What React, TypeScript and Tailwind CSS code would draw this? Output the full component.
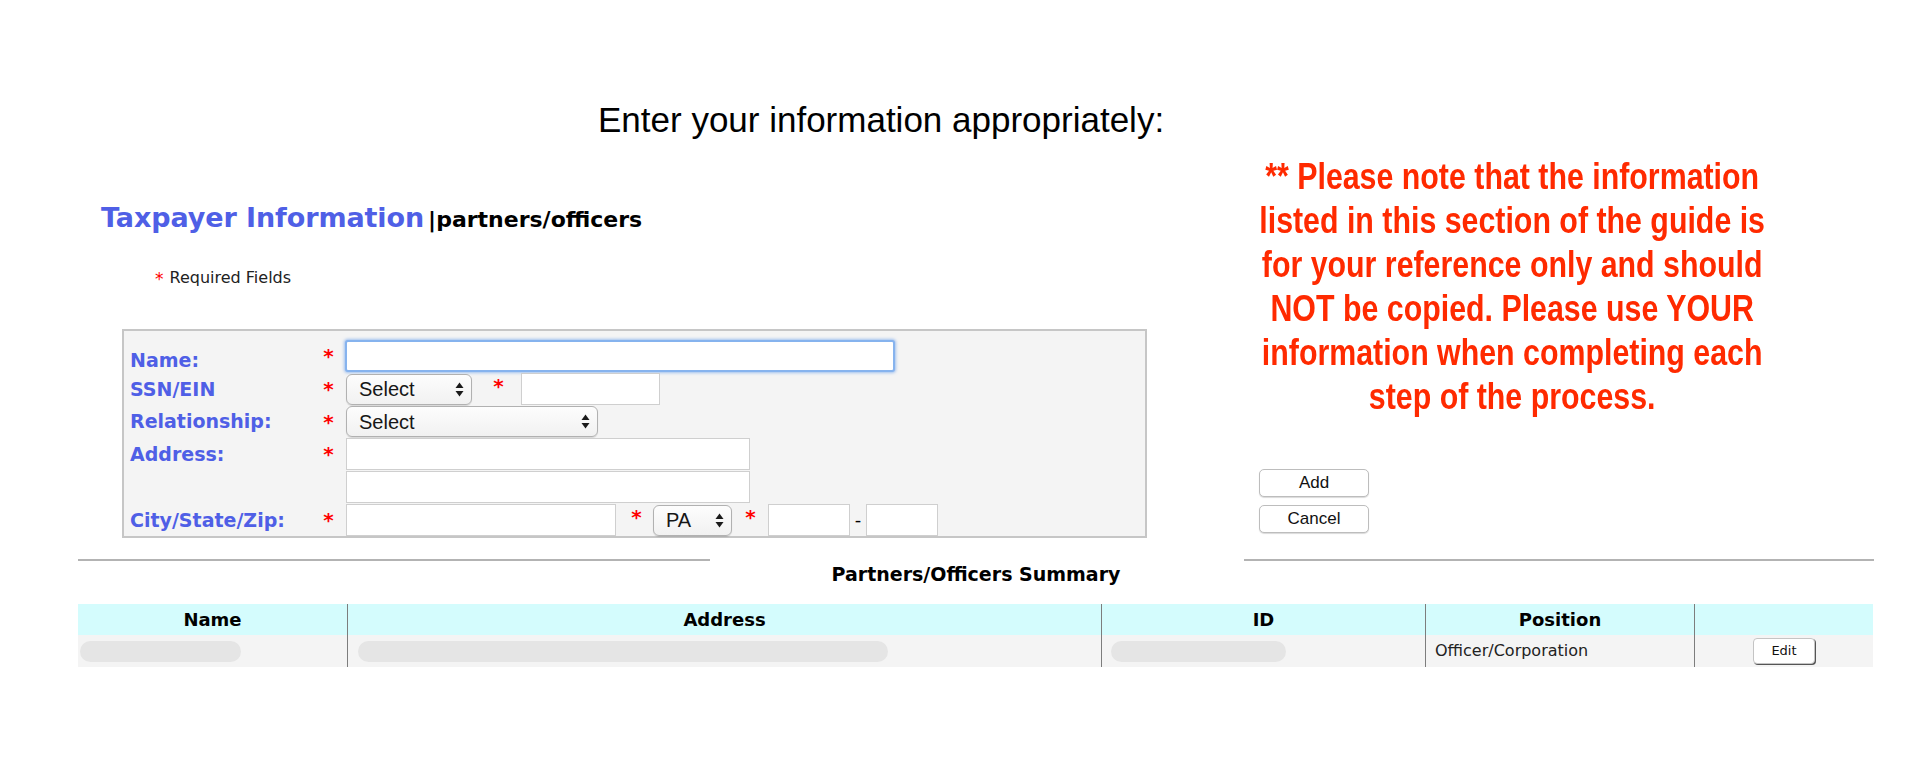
import React from 'react';

const Star = ({ className = '' }: { className?: string }) => (
    <span className={`text-[#ff0000] text-[20px] leading-none font-bold ${className}`}>*</span>
);

const Arrows = () => (
    <svg width="9" height="15" viewBox="0 0 9 15" className="shrink-0">
        <polygon points="0.5,6 4.5,0.5 8.5,6" fill="#1a1a1a" />
        <polygon points="0.5,9 4.5,14.5 8.5,9" fill="#1a1a1a" />
    </svg>
);

function FakeSelect({ label, className }: { label: string; className: string }) {
    return (
        <div
            className={`h-[31px] rounded-[6px] border border-[#b1b1b1] bg-gradient-to-b from-[#fdfdfd] to-[#f1f1f1] flex items-center justify-between pl-[12px] pr-[7px] font-['Liberation_Sans',Arial,sans-serif] text-[20px] text-[#161616] shadow-[0_1px_1px_rgba(0,0,0,0.12)] ${className}`}
        >
            <span>{label}</span>
            <Arrows />
        </div>
    );
}

function Field({ className }: { className: string }) {
    return <div className={`h-[32px] bg-white border border-[#cfcfcf] ${className}`} />;
}

const Label = ({ children }: { children: React.ReactNode }) => (
    <div className="w-[190px] text-[19px] font-bold text-[#4f5fe6] leading-none">{children}</div>
);

const ReqCol = () => (
    <div className="w-[17px] flex justify-center">
        <Star />
    </div>
);

const Pill = ({ className }: { className: string }) => (
    <div className={`h-[21px] rounded-full bg-[#e5e5e5] blur-[0.6px] ${className}`} />
);

export default function App() {
    return (
        <div className="w-[1932px] h-[784px] bg-white overflow-hidden font-['DejaVu_Sans',Verdana,sans-serif] text-black">
            <div className="h-[139px] pt-[100px] pl-[598px] font-['Liberation_Sans',Arial,sans-serif] text-[35px] leading-[40px]">
                Enter your information appropriately:
            </div>

            <div className="flex">
                {/* left: form */}
                <div className="w-[1244px] pl-[101px] pt-[63px]">
                    <div className="flex items-baseline h-[32px] leading-[32px]">
                        <span className="text-[27px] font-bold text-[#4f5fe6] tracking-[-0.1px]">Taxpayer Information</span>
                        <span className="ml-[4px] text-[22px] font-bold text-black">|partners/officers</span>
                    </div>
                    <div className="mt-[34px] pl-[54px] h-[20px] flex items-center text-[16px] text-[#222]">
                        <span className="text-[#ff0000] text-[17px] mr-[6px] mt-[3px]">*</span>
                        Required Fields
                    </div>

                    <div className="mt-[41px] ml-[21px] w-[1025px] h-[209px] border-2 border-[#c6c6c6] bg-[#f4f4f4] pt-[9px] pl-[6px] flex flex-col gap-[1px]">
                        <div className="h-[32px] flex items-center">
                            <Label><span className="relative top-[4px]">Name:</span></Label>
                            <ReqCol />
                            <div className="ml-[8px] w-[550px] h-[32px] bg-white rounded-[3px] border-2 border-[#86b3ee] shadow-[0_0_3px_1px_rgba(90,150,235,0.55)]" />
                        </div>
                        <div className="h-[32px] flex items-center">
                            <Label>SSN/EIN</Label>
                            <ReqCol />
                            <FakeSelect label="Select" className="ml-[9px] w-[126px]" />
                            <div className="ml-[18px] w-[17px] flex justify-center -mt-[6px]"><Star /></div>
                            <Field className="ml-[14px] w-[139px]" />
                        </div>
                        <div className="h-[32px] flex items-center">
                            <Label>Relationship:</Label>
                            <ReqCol />
                            <FakeSelect label="Select" className="ml-[9px] w-[252px]" />
                        </div>
                        <div className="h-[32px] flex items-center">
                            <Label>Address:</Label>
                            <ReqCol />
                            <Field className="ml-[9px] w-[404px]" />
                        </div>
                        <div className="h-[32px] flex items-center">
                            <div className="w-[207px]" />
                            <Field className="ml-[9px] w-[404px]" />
                        </div>
                        <div className="h-[32px] flex items-center">
                            <Label>City/State/Zip:</Label>
                            <ReqCol />
                            <Field className="ml-[9px] w-[270px]" />
                            <div className="ml-[12px] w-[17px] flex justify-center -mt-[6px]"><Star /></div>
                            <FakeSelect label="PA" className="ml-[8px] w-[79px]" />
                            <div className="ml-[10px] w-[17px] flex justify-center -mt-[6px]"><Star /></div>
                            <Field className="ml-[9px] w-[82px]" />
                            <span className="w-[16px] text-center text-[18px] leading-none">-</span>
                            <Field className="w-[72px]" />
                        </div>
                    </div>
                </div>

                {/* right: note + buttons */}
                <div className="w-[536px] pt-[16px]">
                    <div className="w-[654px] origin-top-left scale-x-[0.82] text-center font-['Liberation_Sans',Arial,sans-serif] font-bold text-[37px] leading-[44px] text-[#ff2a00] whitespace-nowrap">
                        <div>** Please note that the information</div>
                        <div>listed in this section of the guide is</div>
                        <div>for your reference only and should</div>
                        <div>NOT be copied. Please use YOUR</div>
                        <div>information when completing each</div>
                        <div>step of the process.</div>
                    </div>
                    <div className="mt-[50px] ml-[15px] flex flex-col gap-[8px]">
                        <button className="w-[110px] h-[28px] rounded-[5px] border border-[#bdbdbd] bg-white shadow-[0_1px_1px_rgba(0,0,0,0.15)] font-['Liberation_Sans',Arial,sans-serif] text-[17px] text-[#111]">
                            Add
                        </button>
                        <button className="w-[110px] h-[28px] rounded-[5px] border border-[#bdbdbd] bg-white shadow-[0_1px_1px_rgba(0,0,0,0.15)] font-['Liberation_Sans',Arial,sans-serif] text-[17px] text-[#111]">
                            Cancel
                        </button>
                    </div>
                </div>
            </div>

            {/* summary */}
            <div className="mt-[21px] flex items-start">
                <div className="ml-[78px] w-[632px] h-[2px] bg-[#b3b3b3]" />
                <div className="ml-[118px] w-[296px] mt-[4px] text-center text-[19px] leading-[22px] font-bold whitespace-nowrap">
                    Partners/Officers Summary
                </div>
                <div className="ml-[120px] w-[630px] h-[2px] bg-[#b3b3b3]" />
            </div>

            <div className="mt-[19px] ml-[78px] w-[1795px] grid grid-cols-[269px_754px_324px_269px_179px] text-[18px]">
                <div className="h-[31px] bg-[#d4fcfd] flex items-center justify-center font-bold">Name</div>
                <div className="h-[31px] bg-[#d4fcfd] border-l border-[#7d7d7d] flex items-center justify-center font-bold">Address</div>
                <div className="h-[31px] bg-[#d4fcfd] border-l border-[#7d7d7d] flex items-center justify-center font-bold">ID</div>
                <div className="h-[31px] bg-[#d4fcfd] border-l border-[#7d7d7d] flex items-center justify-center font-bold">Position</div>
                <div className="h-[31px] bg-[#d4fcfd] border-l border-[#7d7d7d]" />

                <div className="h-[32px] bg-[#f4f4f4] flex items-center">
                    <Pill className="ml-[2px] w-[161px]" />
                </div>
                <div className="h-[32px] bg-[#f4f4f4] border-l border-[#7d7d7d] flex items-center">
                    <Pill className="ml-[10px] w-[530px]" />
                </div>
                <div className="h-[32px] bg-[#f4f4f4] border-l border-[#7d7d7d] flex items-center">
                    <Pill className="ml-[9px] w-[175px]" />
                </div>
                <div className="h-[32px] bg-[#f4f4f4] border-l border-[#7d7d7d] flex items-center pl-[9px] text-[16px] text-[#222]">
                    Officer/Corporation
                </div>
                <div className="h-[32px] bg-[#f4f4f4] border-l border-[#7d7d7d] flex items-center justify-center">
                    <button className="w-[62px] h-[26px] rounded-[4px] border border-[#c4c4c4] bg-white shadow-[1px_1px_0_#555] text-[13px] text-[#111]">
                        Edit
                    </button>
                </div>
            </div>
        </div>
    );
}
